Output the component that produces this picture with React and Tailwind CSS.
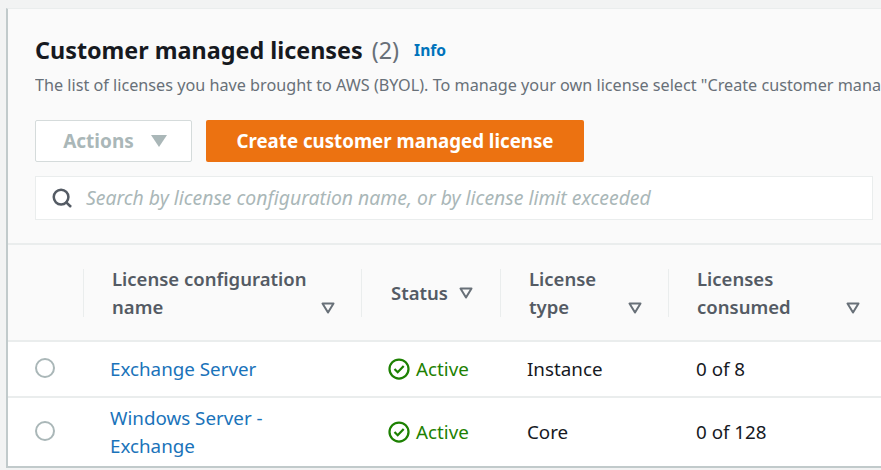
import React from 'react';
import { Search } from 'lucide-react';

const font = { fontFamily: '"Noto Sans", sans-serif' };

function SortCaret({ className = '' }) {
    return (
        <svg viewBox="0 0 14 12" className={`h-[12px] w-[14px] shrink-0 ${className}`}>
            <path d="M1.5 1.5h11L7 10.5z" fill="#fafafa" stroke="#687078" strokeWidth="2" strokeLinejoin="round" />
        </svg>
    );
}

function ActiveIcon() {
    return (
        <svg viewBox="0 0 22 22" className="h-[22px] w-[22px] shrink-0">
            <circle cx="11" cy="11" r="9.5" fill="none" stroke="#1d8102" strokeWidth="2.25" />
            <path d="M6.5 11l3.2 3.2 6-6.2" fill="none" stroke="#1d8102" strokeWidth="2.25" />
        </svg>
    );
}

function HeadCell({ children, caretClass = 'self-end mb-[3px]', className = '' }) {
    return (
        <div className={`flex h-[48px] items-center justify-between border-l border-[#eaeded] ${className}`}>
            <div className="whitespace-nowrap text-[18.5px] font-semibold leading-[28px] text-[#545b64]">{children}</div>
            <SortCaret className={caretClass} />
        </div>
    );
}

function Row({ name, type, used, className = '' }) {
    return (
        <div className={`grid grid-cols-[75px_278px_139px_168px_1fr] items-center bg-white text-[18.8px] leading-[28px] ${className}`}>
            <div className="pl-[27px]">
                <div className="mb-[2px] h-[20px] w-[20px] rounded-full border-2 border-[#aab7b8] bg-white" />
            </div>
            <div className="pl-[27px] pr-[60px] text-[#1a73ba]">{name}</div>
            <div className="flex items-center gap-[6px] pl-[27px] text-[#1d8102]">
                <ActiveIcon />
                <span>Active</span>
            </div>
            <div className="pl-[27px] text-[#16191f]">{type}</div>
            <div className="pl-[28px] text-[#16191f]">{used}</div>
        </div>
    );
}

export default function App() {
    return (
        <div style={font} className="h-[470px] w-[881px] overflow-hidden bg-[#f2f3f3] pl-[6px] pt-[8px]">
            <div className="h-[460px] border-b-[2px] border-l-[2px] border-[#aab7b8]/70 border-t border-t-[#eaeded] bg-[#fafafa]">
                <div className="h-[236px] border-b-2 border-[#eaeded] pl-[27px] pt-[26px]">
                    <div className="flex h-[30px] items-center whitespace-nowrap">
                        <h1 className="text-[23.35px] font-bold text-[#16191f]">
                            Customer managed licenses <span className="ml-[3px] font-normal text-[#687078]">(2)</span>
                        </h1>
                        <a className="ml-[15px] mt-[2px] text-[15.6px] font-bold text-[#0073bb]">Info</a>
                    </div>
                    <p className="mt-[8px] overflow-hidden whitespace-nowrap text-[16.2px] leading-[24px] text-[#687078]">
                        The list of licenses you have brought to AWS (BYOL). To manage your own license select "Create customer managed license"
                    </p>
                    <div className="mt-[23px] flex gap-[14px]">
                        <button className="flex h-[42px] w-[157px] items-center justify-center gap-[17px] rounded-[2px] border border-[#d5dbdb] bg-white pl-[3px] text-[19px] font-bold text-[#aab7b8]">
                            Actions
                            <svg viewBox="0 0 16 12" className="h-[12px] w-[16px]">
                                <path d="M0 0h16L8 12z" fill="#aab7b8" />
                            </svg>
                        </button>
                        <button className="h-[42px] w-[378px] rounded-[2px] bg-[#ec7211] text-[18.7px] font-bold text-white">
                            Create customer managed license
                        </button>
                    </div>
                    <div className="mt-[14px] flex h-[44px] w-[838px] items-center gap-[13px] border border-[#eaeded] bg-white pl-[15px]">
                        <Search size={22} strokeWidth={2.75} className="text-[#545b64]" />
                        <span className="mb-px whitespace-nowrap text-[19.4px] italic text-[#aab7b8]">
                            Search by license configuration name, or by license limit exceeded
                        </span>
                    </div>
                </div>
                <div className="grid h-[97px] grid-cols-[75px_278px_139px_168px_1fr] items-center border-b-2 border-[#eaeded]">
                    <div />
                    <HeadCell className="pl-[28px] pr-[26px]">
                        License configuration
                        <br />
                        name
                    </HeadCell>
                    <HeadCell className="pl-[29px] pr-[27px]" caretClass="self-center">
                        Status
                    </HeadCell>
                    <HeadCell className="pl-[28px] pr-[26px]">
                        License
                        <br />
                        type
                    </HeadCell>
                    <HeadCell className="pl-[28px] pr-[21px]">
                        Licenses
                        <br />
                        consumed
                    </HeadCell>
                </div>
                <Row name="Exchange Server" type="Instance" used="0 of 8" className="h-[56px] border-b-2 border-[#eaeded]" />
                <Row name="Windows Server - Exchange" type="Core" used="0 of 128" className="h-[68px]" />
            </div>
        </div>
    );
}
